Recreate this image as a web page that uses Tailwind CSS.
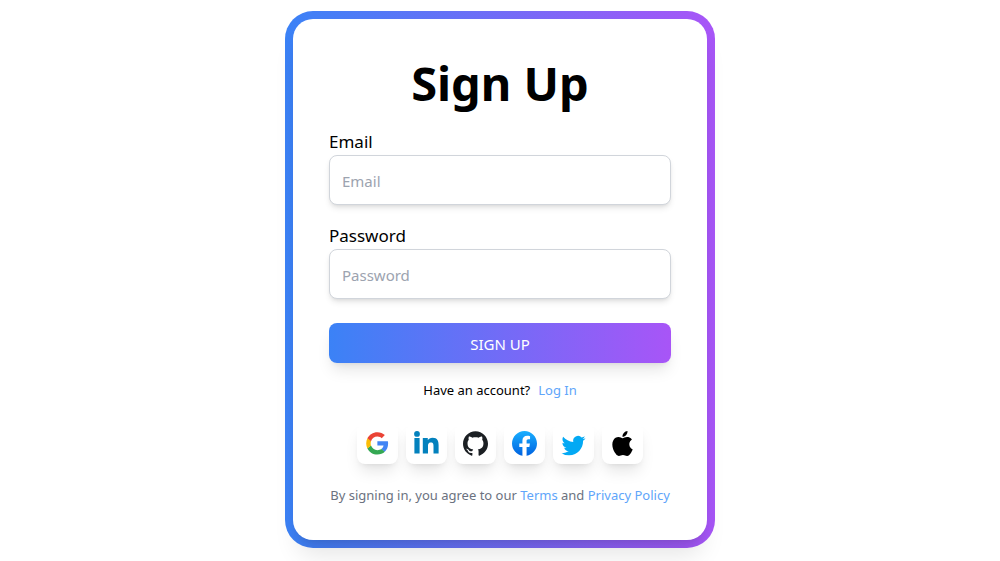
<!DOCTYPE html>
<html lang="en">
<head>
<meta charset="utf-8">
<meta name="viewport" content="width=device-width, initial-scale=1">
<title>Sign Up</title>
<script src="https://cdn.jsdelivr.net/npm/@tailwindcss/browser@4"></script>
</head>
<body class="bg-white text-black font-['Noto_Sans','Open_Sans',sans-serif]">
<main class="flex min-h-screen items-center justify-center pb-0.5">
  <div class="w-full max-w-[430px] rounded-[28px] bg-linear-to-r/srgb from-[#3b82f6] to-[#a855f7] p-2">
    <form class="flex flex-col rounded-[20px] bg-white px-9 pt-[34px] pb-[34px] shadow-xl">
      <h1 class="text-center text-[47px] leading-[60px] font-bold">Sign Up</h1>
      <label for="email" class="mt-[15px] text-[17px] leading-[27px]">Email</label>
      <input id="email" type="email" placeholder="Email" class="h-[50px] w-full rounded-lg border border-[#d1d5db] bg-white px-3 pt-0.5 text-[15px] shadow-md placeholder:text-[#9ca3af]">
      <label for="password" class="mt-[17px] text-[17px] leading-[27px]">Password</label>
      <input id="password" type="password" placeholder="Password" class="h-[50px] w-full rounded-lg border border-[#d1d5db] bg-white px-3 pt-0.5 text-[15px] shadow-md placeholder:text-[#9ca3af]">
      <button type="submit" class="mt-6 h-10 w-full rounded-lg bg-linear-to-r/srgb from-[#3b82f6] to-[#a855f7] pt-0.5 text-[15px] text-white shadow-lg">SIGN UP</button>
      <p class="mt-4 flex justify-center gap-2 text-[13px] leading-[22px]">Have an account? <a href="#" class="text-[#60a5fa]">Log In</a></p>
      <div class="mt-[22px] flex justify-center gap-2">
        <button type="button" aria-label="Google" class="rounded-lg bg-white p-2 shadow-lg">
          <svg class="size-[25px]" viewBox="-14 -14 292 292"><path fill="#4285F4" d="M255.878 133.451c0-10.734-.871-18.567-2.756-26.690H130.550v48.448h71.947c-1.450 12.040-9.283 30.172-26.690 42.356l-.244 1.622 38.755 30.023 2.685.268c24.659-22.774 38.875-56.282 38.875-96.027"/><path fill="#34A853" d="M130.550 261.100c35.248 0 64.839-11.605 86.453-31.622l-41.196-31.913c-11.024 7.688-25.820 13.055-45.257 13.055-34.523 0-63.824-22.773-74.269-54.250l-1.531.130-40.298 31.187-.527 1.465C35.393 231.798 79.490 261.100 130.550 261.100"/><path fill="#FBBC05" d="M56.281 156.370c-2.756-8.123-4.351-16.827-4.351-25.820 0-8.994 1.595-17.697 4.206-25.820l-.073-1.730L15.260 71.312l-1.335.635C5.077 89.644 0 109.517 0 130.550s5.077 40.905 13.925 58.602l42.356-32.782"/><path fill="#EA4335" d="M130.550 50.479c24.514 0 41.050 10.589 50.479 19.438l36.844-35.974C195.245 12.910 165.798 0 130.550 0 79.490 0 35.393 29.301 13.925 71.947l42.211 32.783c10.590-31.477 39.891-54.251 74.414-54.251"/></svg>
        </button>
        <button type="button" aria-label="LinkedIn" class="rounded-lg bg-white p-2 shadow-lg">
          <svg class="size-[25px]" viewBox="0 0 25 25" fill="#0381bd"><circle cx="3" cy="2.900" r="2.900"/><path d="M.4 7H5.600V22.500H.4zM8.800 7h5v2.200c.8-1.500 2.500-2.500 4.800-2.500 5 0 6 3.300 6 7.600v8.200h-5.100v-7.100c0-1.800 0-4-2.600-4s-2.900 1.900-2.900 3.900v7.200H8.800z"/></svg>
        </button>
        <button type="button" aria-label="GitHub" class="rounded-lg bg-white p-2 shadow-lg">
          <svg class="size-[25px]" viewBox="0 0 24 24" fill="#1b1f23"><path d="M12 .297c-6.630 0-12 5.373-12 12 0 5.303 3.438 9.800 8.205 11.385.6.113.82-.258.82-.577 0-.285-.01-1.040-.015-2.040-3.338.724-4.042-1.610-4.042-1.610C4.422 18.070 3.633 17.700 3.633 17.700c-1.087-.744.084-.729.084-.729 1.205.084 1.838 1.236 1.838 1.236 1.070 1.835 2.809 1.305 3.495.998.108-.776.417-1.305.76-1.605-2.665-.3-5.466-1.332-5.466-5.930 0-1.310.465-2.380 1.235-3.220-.135-.303-.54-1.523.105-3.176 0 0 1.005-.322 3.300 1.230.96-.267 1.980-.399 3-.405 1.020.006 2.040.138 3 .405 2.280-1.552 3.285-1.230 3.285-1.230.645 1.653.24 2.873.12 3.176.765.84 1.230 1.910 1.230 3.220 0 4.610-2.805 5.625-5.475 5.920.42.36.81 1.096.81 2.220 0 1.606-.015 2.896-.015 3.286 0 .315.21.69.825.57C20.565 22.092 24 17.592 24 12.297c0-6.627-5.373-12-12-12"/></svg>
        </button>
        <button type="button" aria-label="Facebook" class="rounded-lg bg-white p-2 shadow-lg">
          <svg class="size-[25px]" viewBox="0 0 36 36"><defs><linearGradient id="facebook-blue" x1="0" y1="0" x2="0" y2="1"><stop stop-color="#19afff"/><stop offset="1" stop-color="#0062e0"/></linearGradient></defs><path fill="url(#facebook-blue)" d="M15 35.800C6.500 34.300 0 26.900 0 18 0 8.100 8.100 0 18 0s18 8.100 18 18c0 8.900-6.500 16.300-15 17.800l-1-.8h-4l-1 .8z"/><path fill="#fff" d="M25 23l.8-5H21v-3.500c0-1.400.5-2.500 2.700-2.500H26V7.400c-1.300-.2-2.700-.4-4-.4-4.100 0-7 2.500-7 7v4h-4.500v5H15v12.700c1 .2 2 .3 3 .3s2-.1 3-.3V23h4z"/></svg>
        </button>
        <button type="button" aria-label="Twitter" class="rounded-lg bg-white p-2 shadow-lg">
          <svg class="size-[25px]" viewBox="0 0 25 25" fill="#03a9f4"><path transform="translate(.5 2.600)" d="M23.953 4.570a10 10 0 0 1-2.825.775 4.958 4.958 0 0 0 2.163-2.723c-.951.555-2.005.959-3.127 1.184a4.920 4.920 0 0 0-8.384 4.482C7.690 8.095 4.067 6.130 1.640 3.162a4.822 4.822 0 0 0-.666 2.475c0 1.710.87 3.213 2.188 4.096a4.904 4.904 0 0 1-2.228-.616v.06a4.923 4.923 0 0 0 3.946 4.827 4.996 4.996 0 0 1-2.212.085 4.936 4.936 0 0 0 4.604 3.417 9.867 9.867 0 0 1-6.102 2.105c-.39 0-.779-.023-1.170-.067a13.995 13.995 0 0 0 7.557 2.209c9.053 0 13.998-7.496 13.998-13.985 0-.21 0-.42-.015-.63A9.935 9.935 0 0 0 24 4.590z"/></svg>
        </button>
        <button type="button" aria-label="Apple" class="rounded-lg bg-white p-2 shadow-lg">
          <svg class="size-[25px]" viewBox="0 0 24 24" fill="#000"><path d="M12.152 6.896c-.948 0-2.415-1.078-3.960-1.040-2.040.027-3.910 1.183-4.961 3.014-2.117 3.675-.546 9.103 1.519 12.090 1.013 1.454 2.208 3.090 3.792 3.039 1.520-.065 2.090-.987 3.935-.987 1.831 0 2.350.987 3.960.948 1.637-.026 2.676-1.480 3.676-2.948 1.156-1.688 1.636-3.325 1.662-3.415-.039-.013-3.182-1.221-3.220-4.857-.026-3.040 2.480-4.494 2.597-4.559-1.429-2.090-3.623-2.324-4.390-2.376-2-.156-3.675 1.090-4.610 1.090zM15.530 3.830c.843-1.012 1.400-2.427 1.245-3.830-1.207.052-2.662.805-3.532 1.818-.78.896-1.454 2.338-1.273 3.714 1.338.104 2.715-.688 3.559-1.701"/></svg>
        </button>
      </div>
      <p class="mt-5 text-center text-[13px] leading-[22px] text-[#6b7280]">By signing in, you agree to our <a href="#" class="text-[#60a5fa]">Terms</a> and <a href="#" class="text-[#60a5fa]">Privacy Policy</a></p>
    </form>
  </div>
</main>
</body>
</html>
